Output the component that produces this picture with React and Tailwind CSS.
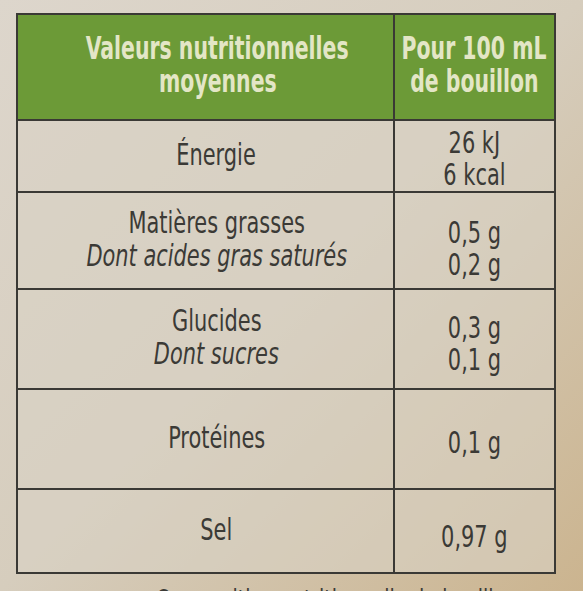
import React from "react";

const F = { fontFamily: "'Liberation Sans Narrow', 'DejaVu Sans Condensed', 'Liberation Sans', sans-serif" };

function Row({ h, left, right, rightPad = "pt-0" }) {
  return (
    <div className={`flex border-t-2 border-[#3a3935] ${h}`}>
      <div className="w-[377px] shrink-0 min-w-0 border-r-2 border-[#3a3935] flex flex-col items-center justify-center pl-[22px] pb-[4px] text-[31px] leading-[33px] text-[#3b3a36]">
        {left}
      </div>
      <div className={`flex-1 min-w-0 flex flex-col items-center justify-center text-[31px] leading-[32px] text-[#3b3a36] ${rightPad}`}>
        {right}
      </div>
    </div>
  );
}

function S({ children, italic }) {
  return (
    <span className={`inline-block whitespace-nowrap scale-x-[0.75] ${italic ? "italic" : ""}`}>{children}</span>
  );
}

export default function App() {
  return (
    <div
      style={F}
      className="w-[583px] h-[591px] overflow-hidden bg-gradient-to-br from-[#ddd6cc] via-[#d6cdbd] to-[#cbb48f] pt-[13px] pl-[16px]"
    >
      <div className="w-[540px] border-2 border-[#3a3935] bg-[#d9d2c4]/60">
        <div className="flex h-[104px] bg-[#6c9a37] text-[#e3e6c6] font-bold text-[32px] leading-[33px]">
          <div className="w-[377px] shrink-0 min-w-0 border-r-2 border-[#3a3935] flex flex-col items-center justify-center pl-[24px] pb-[4px]">
            <span className="inline-block whitespace-nowrap scale-x-[0.71]">Valeurs nutritionnelles</span>
            <span className="inline-block whitespace-nowrap scale-x-[0.71]">moyennes</span>
          </div>
          <div className="flex-1 min-w-0 flex flex-col items-center justify-center pb-[4px]">
            <span className="inline-block whitespace-nowrap scale-x-[0.71]">Pour 100 mL</span>
            <span className="inline-block whitespace-nowrap scale-x-[0.71]">de bouillon</span>
          </div>
        </div>
        <Row
          h="h-[72px]"
          left={<S>Énergie</S>}
          right={<><S>26 kJ</S><S>6 kcal</S></>}
          rightPad="pt-[4px]"
        />
        <Row
          h="h-[97px]"
          left={<><S>Matières grasses</S><S italic>Dont acides gras saturés</S></>}
          right={<><S>0,5 g</S><S>0,2 g</S></>}
          rightPad="pt-[14px]"
        />
        <Row
          h="h-[100px]"
          left={<><S>Glucides</S><S italic>Dont sucres</S></>}
          right={<><S>0,3 g</S><S>0,1 g</S></>}
          rightPad="pt-[8px]"
        />
        <Row h="h-[100px]" left={<S>Protéines</S>} right={<S>0,1 g</S>} rightPad="pt-[6px]" />
        <Row h="h-[84px]" left={<S>Sel</S>} right={<S>0,97 g</S>} rightPad="pt-[10px]" />
      </div>
      <div className="mt-[11px] pl-[140px] text-[28px] leading-[32px] text-[#3b3a36] whitespace-nowrap">
        <span className="inline-block scale-x-[0.75] origin-left">Composition nutritionnelle du bouillon</span>
      </div>
    </div>
  );
}
